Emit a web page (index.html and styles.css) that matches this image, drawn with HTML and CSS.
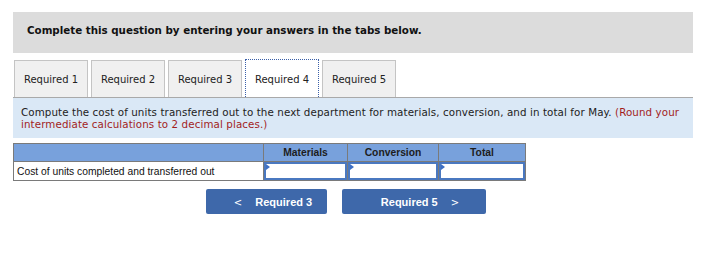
FILE: index.html
```html
<!DOCTYPE html>
<html>
<head>
    <title>Required 4</title>
    <link rel="stylesheet" href="styles.css">
</head>
<body>
    <div class="container">
        <div class="banner">Complete this question by entering your answers in the tabs below.</div>

        <div class="tabs">
            <div class="tab">Required 1</div>
            <div class="tab">Required 2</div>
            <div class="tab">Required 3</div>
            <div class="tab active">Required 4</div>
            <div class="tab">Required 5</div>
        </div>

        <div class="instructions">
            Compute the cost of units transferred out to the next department for materials, conversion, and in total for May.
            <span class="note">(Round your</span><br>
            <span class="note">intermediate calculations to 2 decimal places.)</span>
        </div>

        <table class="answer-table">
            <tr class="head-row">
                <th class="label-col"></th>
                <th class="mat-col">Materials</th>
                <th class="conv-col">Conversion</th>
                <th class="total-col">Total</th>
            </tr>
            <tr>
                <td class="label-cell">Cost of units completed and transferred out</td>
                <td class="input-cell"><input type="text"></td>
                <td class="input-cell"><input type="text"></td>
                <td class="input-cell"><input type="text"></td>
            </tr>
        </table>

        <div class="nav">
            <button class="nav-button prev"><span class="chev">&lt;</span> Required 3</button>
            <button class="nav-button next">Required 5 <span class="chev">&gt;</span></button>
        </div>
    </div>
</body>
</html>
```

FILE: styles.css
```css
/* Reset and base styles */
* {
    margin: 0;
    padding: 0;
    box-sizing: border-box;
}

body {
    background: white;
    color: #1d1d1f;
    font-family: "DejaVu Sans", Verdana, sans-serif;
}

.container {
    padding: 12px 16px 0 13px;
}

/* Banner */
.banner {
    background: #dcdcdc;
    height: 41px;
    padding: 12px 14px 0;
    font-size: 10.3px;
    font-weight: bold;
    color: #111;
}

/* Tabs */
.tabs {
    display: flex;
    gap: 3px;
    margin-top: 7px;
    padding-left: 1px;
    border-bottom: 1px solid #a9a9a9;
}

.tab {
    width: 74px;
    height: 37px;
    background: #f0f0f0;
    border: 1px solid #c4c4c4;
    border-bottom: none;
    font-size: 10px;
    color: #222;
    text-align: center;
    line-height: 38px;
}

.tab.active {
    background: white;
    border: 1px dotted #3a5fa8;
    border-bottom: none;
    height: 38px;
    margin-top: -1px;
    margin-bottom: -1px;
    line-height: 40px;
}

/* Instructions */
.instructions {
    background: #dae8f6;
    padding: 8px 8px 0;
    font-size: 10.3px;
    letter-spacing: 0.1px;
    line-height: 12px;
    color: #222;
    height: 40px;
}

.note {
    color: #a21d1d;
}

/* Table */
.answer-table {
    margin-top: 5px;
    border-collapse: collapse;
    border: 1px solid #7a7a7a;
    font-family: "Liberation Sans", Arial, sans-serif;
    font-size: 10.3px;
}

.head-row th {
    background: #78a1dc;
    height: 18px;
    border-left: 1px solid #7a7a7a;
    font-weight: bold;
    color: #1d1d1d;
}

.head-row th.label-col {
    border-left: none;
}

.label-col { width: 250px; }
.mat-col { width: 84px; }
.conv-col { width: 91px; }
.total-col { width: 87px; }

.head-row {
    border-bottom: 1px solid #7a7a7a;
}

.label-cell {
    height: 18px;
    padding-left: 3px;
    color: #111;
}

.input-cell {
    border-left: 1px solid #7a7a7a;
    padding: 0;
    position: relative;
}

.input-cell input {
    display: block;
    width: 100%;
    height: 18px;
    border: 2px solid #4a78c0;
    background: white;
    outline: none;
}

.input-cell::before {
    content: "";
    position: absolute;
    left: 2px;
    top: 2px;
    border-top: 3px solid transparent;
    border-bottom: 3px solid transparent;
    border-left: 4px solid #3d6fc4;
}

/* Nav buttons */
.nav {
    display: flex;
    gap: 15px;
    margin-top: 8px;
    padding-left: 193px;
}

.nav-button {
    height: 25px;
    background: #3e68aa;
    color: white;
    border: none;
    border-radius: 2px;
    font-family: "Liberation Sans", Arial, sans-serif;
    font-size: 11px;
    font-weight: bold;
}

.nav-button.prev {
    width: 121px;
    padding-left: 3px;
}

.nav-button.next {
    width: 144px;
    padding-left: 22px;
}

.chev {
    font-family: "DejaVu Sans", sans-serif;
    font-weight: normal;
    font-size: 10px;
    margin: 0 10px;
}
```
